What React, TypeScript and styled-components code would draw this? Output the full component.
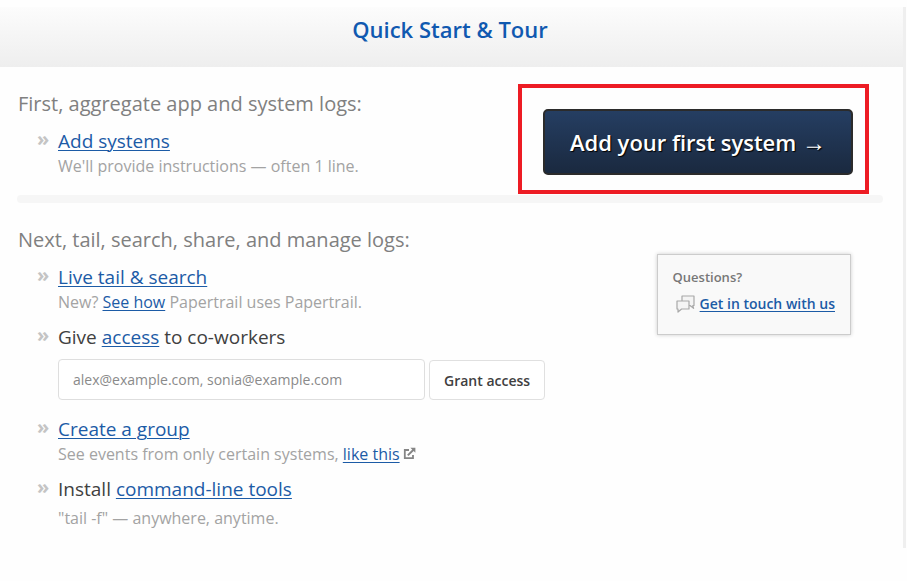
import React from "react";
import styled, { createGlobalStyle } from "styled-components";

const GlobalStyle = createGlobalStyle`
  * { box-sizing: border-box; }
  body {
    margin: 0;
    background: #fefefe;
    color: #404040;
    font-family: "Open Sans", "Noto Sans", sans-serif;
  }
  h1, h2, p, ul { margin: 0; padding: 0; }
`;

const Panel = styled.main`
  margin: 7px 1px 0 0;
  border-right: 3px solid #efefef;
  padding-bottom: 18px;
`;

const Header = styled.header`
  height: 60px;
  padding: 6px 3px 0 0;
  background: linear-gradient(#fcfcfc, #eeeeee);
  text-align: center;
`;

const Title = styled.h1`
  font-size: 22px;
  font-weight: 600;
  line-height: 32px;
  color: #1059b0;
`;

const Body = styled.div`
  padding: 0 20px 0 17px;
`;

const Section = styled.section`
  display: flex;
  justify-content: space-between;
  align-items: flex-start;
`;

const Column = styled.div`
  padding-top: 23px;
`;

const Heading = styled.h2`
  padding-left: 1px;
  font-size: 20px;
  font-weight: 400;
  line-height: 28px;
  color: #808080;
`;

const List = styled.ul`
  display: flex;
  flex-direction: column;
  gap: 10px;
  padding-top: 10px;
  list-style: none;
`;

const Item = styled.li`
  display: flex;
`;

const Marker = styled.span`
  width: 41px;
  flex: none;
  padding-left: 20px;
  font-size: 20px;
  font-weight: 700;
  line-height: 22px;
  color: #c4c4c4;
`;

const ItemTitle = styled.p`
  font-size: 19px;
  line-height: 26px;
`;

const Note = styled.p<{ $spaced?: boolean }>`
  padding-top: ${(p) => (p.$spaced ? 4 : 0)}px;
  font-size: 16px;
  line-height: 24px;
  color: #a3a3a3;
`;

const Link = styled.a`
  color: #1c5ba6;
  text-decoration: underline;
  text-decoration-thickness: 1px;
  text-underline-offset: 2px;
`;

const Divider = styled.hr`
  height: 8px;
  margin: 1px 0 0;
  border: 0;
  border-radius: 4px;
  background: #f6f6f6;
`;

const Highlight = styled.div`
  margin: 17px 14px 0 0;
  padding: 21px 12px 15px 21px;
  border: 4px solid #ed1c24;
`;

const PrimaryButton = styled.button`
  height: 66px;
  padding: 0 25px;
  border: 2px solid #2b2b2b;
  border-radius: 5px;
  background: linear-gradient(#253e62, #1a293f);
  color: #fff;
  font: 600 22px/32px "Open Sans", sans-serif;
  text-shadow: 1px 1px 1px #000;
  white-space: nowrap;
`;

const Arrow = styled.span`
  font-family: "Liberation Serif", serif;
  font-weight: 400;
  font-size: 24px;
  line-height: 24px;
`;

const InviteForm = styled.form`
  display: flex;
  align-items: flex-end;
  gap: 4px;
  padding: 9px 0 6px;
`;

const EmailInput = styled.input`
  width: 367px;
  height: 41px;
  padding: 0 14px;
  border: 1px solid #dedede;
  border-radius: 4px;
  background: #fff;
  color: #404040;
  font: 14px "Open Sans", sans-serif;
  &::placeholder { color: #8a8a8a; opacity: 1; }
`;

const GrantButton = styled.button`
  height: 40px;
  padding: 0 14px;
  border: 1px solid #e0e0e0;
  border-radius: 4px;
  background: #fff;
  color: #404040;
  font: 600 14px "Open Sans", sans-serif;
  white-space: nowrap;
`;

const ExternalIcon = styled.svg`
  margin-left: 3px;
`;

const HelpCard = styled.aside`
  margin: 51px 32px 0 0;
  padding: 11px 15px 19px;
  border: 1px solid #cccccc;
  background: #f9f9f9;
  box-shadow: 0 0 4px rgba(0, 0, 0, 0.2);
`;

const HelpTitle = styled.p`
  font-size: 13px;
  font-weight: 600;
  line-height: 22px;
  color: #777;
`;

const HelpRow = styled.div`
  display: flex;
  align-items: center;
  gap: 5px;
  padding: 5px 0 0 3px;
  font-size: 14px;
  font-weight: 600;
  line-height: 22px;
`;

type EntryProps = {
  title: React.ReactNode;
  children: React.ReactNode;
};

function Entry({ title, children }: EntryProps) {
  return (
    <Item>
      <Marker aria-hidden="true">»</Marker>
      <div>
        <ItemTitle>{title}</ItemTitle>
        {children}
      </div>
    </Item>
  );
}

export default function App() {
  return (
    <>
      <GlobalStyle />
      <Panel>
        <Header>
          <Title>Quick Start &amp; Tour</Title>
        </Header>
        <Body>
          <Section>
            <Column>
              <Heading>First, aggregate app and system logs:</Heading>
              <List>
                <Entry title={<Link href="#systems">Add systems</Link>}>
                  <Note>We'll provide instructions — often 1 line.</Note>
                </Entry>
              </List>
            </Column>
            <Highlight>
              <PrimaryButton type="button">
                Add your first system <Arrow>→</Arrow>
              </PrimaryButton>
            </Highlight>
          </Section>
          <Divider />
          <Section>
            <Column>
              <Heading>Next, tail, search, share, and manage logs:</Heading>
              <List>
                <Entry title={<Link href="#search">Live tail &amp; search</Link>}>
                  <Note>
                    New? <Link href="#how">See how</Link> Papertrail uses Papertrail.
                  </Note>
                </Entry>
                <Entry
                  title={
                    <>
                      Give <Link href="#access">access</Link> to co-workers
                    </>
                  }
                >
                  <InviteForm onSubmit={(e) => e.preventDefault()}>
                    <EmailInput
                      type="text"
                      aria-label="Co-worker email addresses"
                      placeholder="alex@example.com, sonia@example.com"
                    />
                    <GrantButton type="submit">Grant access</GrantButton>
                  </InviteForm>
                </Entry>
                <Entry title={<Link href="#group">Create a group</Link>}>
                  <Note>
                    See events from only certain systems, <Link href="#example">like this</Link>
                    <ExternalIcon width="13" height="13" viewBox="0 0 13 13" fill="none" stroke="#858585" aria-hidden="true">
                      <path d="M6 3H1.8v8.2H10V8" strokeWidth="1.8" />
                      <path d="M4.8 8.4 10.5 2.7" strokeWidth="2" />
                      <path d="M7.4.8h5v5z" fill="#858585" stroke="none" />
                    </ExternalIcon>
                  </Note>
                </Entry>
                <Entry
                  title={
                    <>
                      Install <Link href="#cli">command-line tools</Link>
                    </>
                  }
                >
                  <Note $spaced>"tail -f" — anywhere, anytime.</Note>
                </Entry>
              </List>
            </Column>
            <HelpCard>
              <HelpTitle>Questions?</HelpTitle>
              <HelpRow>
                <svg width="19" height="18" viewBox="0 0 19 18" fill="#f4f4f4" stroke="#a8a8a8" strokeWidth="1.2" strokeLinejoin="round" aria-hidden="true">
                  <path d="M6 1h12v9.5h-1.2l.8 2.8-3.6-2.8H6z" />
                  <path d="M1 6h12v8H5.6L2 17v-3H1z" />
                </svg>
                <Link href="#contact">Get in touch with us</Link>
              </HelpRow>
            </HelpCard>
          </Section>
        </Body>
      </Panel>
    </>
  );
}
